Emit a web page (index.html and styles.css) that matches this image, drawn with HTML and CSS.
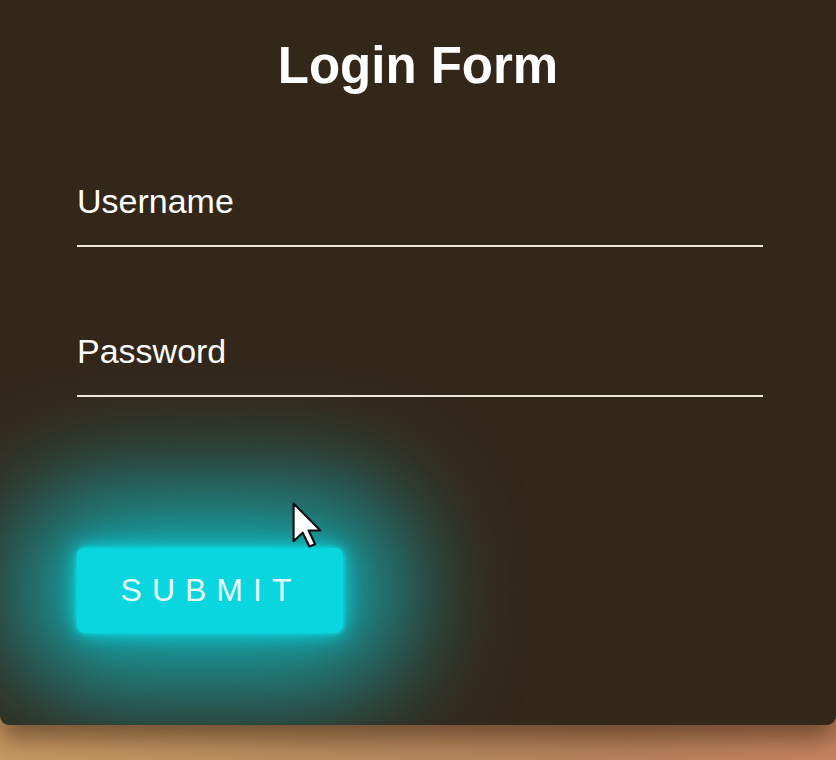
FILE: index.html
```html
<!DOCTYPE html>
<html lang="en">
<head>
<meta charset="utf-8">
<title>Login Form</title>
<link rel="stylesheet" href="styles.css">
</head>
<body>
<div class="page">
  <form class="card">
    <h1 class="title">Login Form</h1>
    <div class="field"><span class="label">Username</span></div>
    <div class="field field-last"><span class="label">Password</span></div>
    <button type="button" class="submit">SUBMIT</button>
  </form>
  <svg class="cursor" width="30" height="46" viewBox="0 0 12.4 19.2" aria-hidden="true">
    <path d="M0.6 0.6 L0.6 16.4 L4.4 12.8 L7.2 18.6 L9.6 17.6 L6.9 11.9 L11.8 11.9 Z" fill="#ffffff" stroke="#111111" stroke-width="0.9" stroke-linejoin="round"/>
  </svg>
</div>
</body>
</html>
```

FILE: styles.css
```css
html, body {
  margin: 0;
  padding: 0;
}
body {
  width: 836px;
  height: 760px;
  overflow: hidden;
  background: linear-gradient(90deg, #c99a64 0%, #b88c5e 40%, #b9825c 75%, #c6855f 100%);
  font-family: "Liberation Sans", Arial, sans-serif;
}
.page {
  position: relative;
  height: 760px;
  overflow: hidden;
}
.card {
  position: relative;
  isolation: isolate;
  box-sizing: border-box;
  width: 836px;
  height: 725px;
  padding: 38px 73px 0 77px;
  background: #33271a;
  border-radius: 0 0 9px 9px;
  box-shadow: 0 14px 24px rgba(40, 20, 5, 0.5);
  display: flex;
  flex-direction: column;
  align-items: stretch;
  overflow: hidden;
}
.title {
  margin: 0 -73px 87px -77px;
  text-align: center;
  color: #ffffff;
  font-size: 51px;
  font-weight: bold;
  line-height: 56px;
}
.field {
  padding-bottom: 24px;
  border-bottom: 2px solid #efe7dc;
  margin-bottom: 84px;
}
.field-last {
  margin-bottom: 151px;
}
.label {
  display: block;
  color: #ffffff;
  font-size: 34px;
  line-height: 40px;
}
.submit {
  position: relative;
  align-self: flex-start;
  width: 266px;
  height: 85px;
  border: none;
  border-radius: 8px;
  background: #0ad6df;
  color: #e8fcfc;
  font-family: "Liberation Sans", Arial, sans-serif;
  font-size: 32px;
  letter-spacing: 10px;
  padding: 0 0 0 2px;
  box-shadow:
    0 0 5px #10e0ea,
    0 0 18px #0cd4de,
    0 0 34px rgba(12, 196, 204, 0.6);
}
.submit::before {
  content: "";
  position: absolute;
  top: -55px;
  bottom: -55px;
  left: -60px;
  right: -60px;
  border-radius: 70px;
  background: #15acb2;
  filter: blur(58px);
  z-index: -1;
}
.cursor {
  position: absolute;
  left: 292px;
  top: 502px;
}
```
